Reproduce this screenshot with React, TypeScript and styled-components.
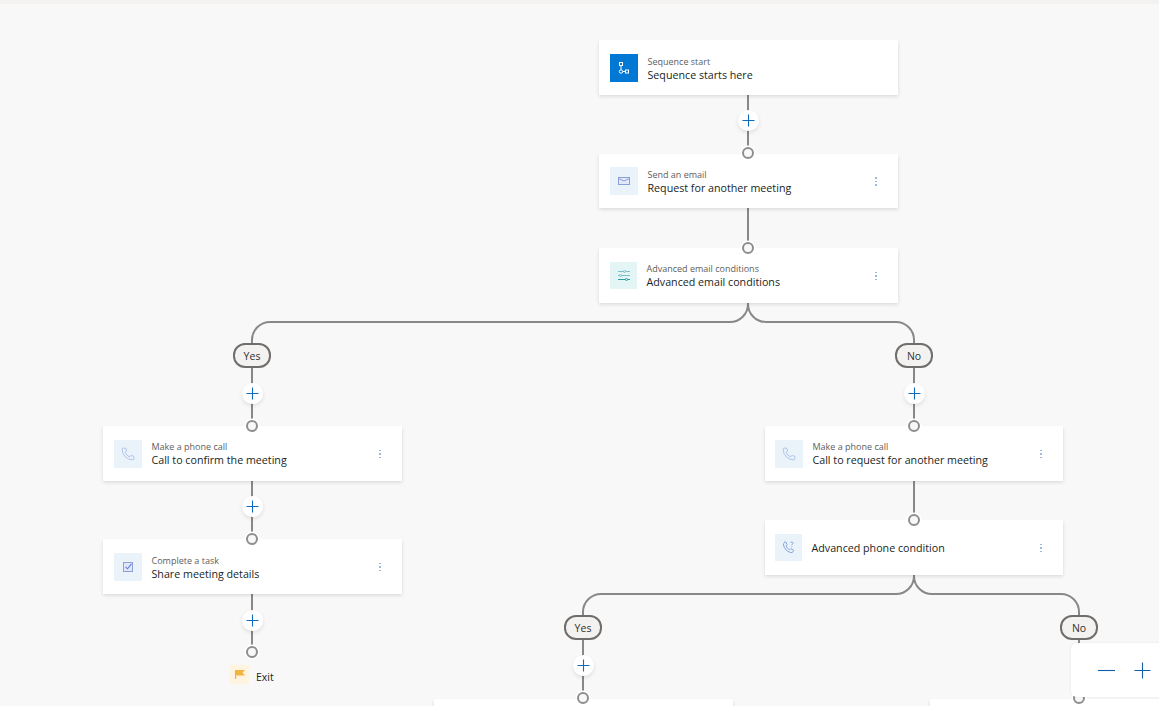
import React from "react";
import styled, { createGlobalStyle } from "styled-components";
import { Phone } from "lucide-react";

const GlobalStyle = createGlobalStyle`
  html, body {
    margin: 0;
    padding: 0;
    height: 100%;
    overflow: hidden;
    background: #f8f8f8;
    font-family: "Open Sans", "Noto Sans", "Liberation Sans", sans-serif;
  }
`;

type Tone = "start" | "blue" | "teal";
type IconKind = "flow" | "mail" | "sliders" | "phone" | "phoneAsk" | "task";

interface StepData {
  x: number;
  y: number;
  w?: number;
  h?: number;
  pad?: number;
  kind: IconKind;
  tone: Tone;
  label?: string;
  title?: string;
  menu?: boolean;
  tile?: number;
  lower?: boolean;
}

const steps: StepData[] = [
  { x: 599, y: 40, h: 55, kind: "flow", tone: "start", label: "Sequence start", title: "Sequence starts here", lower: true },
  { x: 599, y: 154, kind: "mail", tone: "blue", label: "Send an email", title: "Request for another meeting", menu: true },
  { x: 599, y: 248, h: 55, kind: "sliders", tone: "teal", label: "Advanced email conditions", title: "Advanced email conditions", menu: true, tile: 27 },
  { x: 103, y: 426, h: 55, kind: "phone", tone: "blue", label: "Make a phone call", title: "Call to confirm the meeting", menu: true },
  { x: 103, y: 539, h: 55, kind: "task", tone: "blue", label: "Complete a task", title: "Share meeting details", menu: true, lower: true },
  { x: 765, y: 426, w: 298, h: 55, pad: 10, kind: "phone", tone: "blue", label: "Make a phone call", title: "Call to request for another meeting", menu: true },
  { x: 765, y: 520, w: 298, h: 55, pad: 10, kind: "phoneAsk", tone: "blue", title: "Advanced phone condition", menu: true, tile: 27 },
  { x: 434, y: 699, kind: "phone", tone: "blue" },
  { x: 930, y: 699, kind: "phone", tone: "blue" },
];

const plusButtons = [
  [748, 120],
  [252, 393],
  [252, 506],
  [252, 620],
  [914, 393],
  [583, 665],
];

const ports = [
  [748, 153],
  [748, 247.5],
  [252, 425.5],
  [252, 539],
  [252, 652],
  [914, 425.5],
  [914, 520],
  [583, 698],
  [1079, 698],
];

const pills = [
  { x: 252, y: 355, text: "Yes" },
  { x: 914, y: 355, text: "No" },
  { x: 583, y: 627, text: "Yes" },
  { x: 1079, y: 627, text: "No" },
];

const wires = [
  "M748 95V153",
  "M748 208V247",
  "M748 303V304a18 18 0 0 1-18 18H270a18 18 0 0 0-18 18V425",
  "M748 303V304a18 18 0 0 0 18 18H896a18 18 0 0 1 18 18V425",
  "M252 481V539",
  "M252 594V652",
  "M914 481V520",
  "M914 575V576a18 18 0 0 1-18 18H601a18 18 0 0 0-18 18V698",
  "M914 575V576a18 18 0 0 0 18 18H1061a18 18 0 0 1 18 18V698",
];

const Page = styled.div`
  width: 1159px;
  height: 706px;
  display: flex;
  flex-direction: column;
  overflow: hidden;
`;

const TopStrip = styled.div`
  height: 4px;
  flex: none;
  background: #f3f2f1;
`;

const Canvas = styled.div`
  position: relative;
  flex: 1;
  margin-top: -4px;
`;

const Wires = styled.svg`
  position: absolute;
  left: 0;
  top: 0;
`;

const StepCard = styled.div<{ $x: number; $y: number; $w: number; $h: number; $pad: number }>`
  position: absolute;
  left: ${(p) => p.$x}px;
  top: ${(p) => p.$y}px;
  width: ${(p) => p.$w}px;
  height: ${(p) => p.$h}px;
  box-sizing: border-box;
  padding: 0 16px 0 ${(p) => p.$pad}px;
  display: flex;
  align-items: center;
  background: #fff;
  box-shadow: 0 1.6px 3.6px rgba(0, 0, 0, 0.13), 0 0.3px 0.9px rgba(0, 0, 0, 0.11);
`;

const toneBg: Record<Tone, string> = {
  start: "#0078d4",
  blue: "#ebf3fa",
  teal: "#e3f5f5",
};

const IconTile = styled.div<{ $tone: Tone; $size: number }>`
  width: ${(p) => p.$size}px;
  height: ${(p) => p.$size}px;
  flex: none;
  display: flex;
  align-items: center;
  justify-content: center;
  background: ${(p) => toneBg[p.$tone]};
`;

const StepText = styled.div<{ $lower: boolean }>`
  flex: 1;
  margin-left: 9.5px;
  padding-top: ${(p) => (p.$lower ? 2 : 0)}px;
  display: flex;
  flex-direction: column;
  min-width: 0;
`;

const StepLabel = styled.span`
  font-size: 9px;
  line-height: 13px;
  color: #605e5c;
`;

const StepTitle = styled.span`
  font-size: 10.7px;
  line-height: 14px;
  color: #201f1e;
`;

const KebabButton = styled.div`
  width: 2px;
  display: flex;
  flex-direction: column;
  gap: 2px;
  margin: 1px 5px 0 0;
`;

const KebabDot = styled.i`
  display: block;
  width: 1.5px;
  height: 1.5px;
  border-radius: 50%;
  background: #86aedb;
`;

const PlusButton = styled.div<{ $x: number; $y: number }>`
  position: absolute;
  left: ${(p) => p.$x - 10.5}px;
  top: ${(p) => p.$y - 10.5}px;
  width: 21px;
  height: 21px;
  border-radius: 50%;
  background: #fff;
  display: flex;
  align-items: center;
  justify-content: center;
  box-shadow: 0 2px 4px rgba(0, 0, 0, 0.1);
`;

const Port = styled.div<{ $x: number; $y: number }>`
  position: absolute;
  left: ${(p) => p.$x - 6}px;
  top: ${(p) => p.$y - 6}px;
  width: 12px;
  height: 12px;
  box-sizing: border-box;
  border: 2px solid #908e8c;
  border-radius: 50%;
  background: #f8f8f8;
  box-shadow: 0 0 0 1.5px #fff;
`;

const BranchPill = styled.div<{ $x: number; $y: number }>`
  position: absolute;
  left: ${(p) => p.$x - 19}px;
  top: ${(p) => p.$y - 12.5}px;
  width: 38px;
  height: 25px;
  box-sizing: border-box;
  border: 2px solid #706e6c;
  border-radius: 12px;
  background: #f3f2f1;
  display: flex;
  align-items: center;
  justify-content: center;
  padding-top: 1px;
  font-size: 10.5px;
  color: #323130;
`;

const ExitMark = styled.div`
  position: absolute;
  left: 230px;
  top: 665px;
  display: flex;
  align-items: center;
  gap: 7px;
  font-size: 10.5px;
  color: #201f1e;
`;

const ExitTile = styled.div`
  width: 19px;
  height: 19px;
  display: flex;
  align-items: center;
  justify-content: center;
  background: #fff4e0;
`;

const ExitLabel = styled.span`
  margin-top: 5px;
`;

const ZoomPanel = styled.div`
  position: absolute;
  left: 1071px;
  top: 643px;
  width: 100px;
  height: 54px;
  border-radius: 6px;
  background: #fff;
  display: flex;
  align-items: center;
  gap: 19px;
  padding-left: 27px;
  box-sizing: border-box;
  box-shadow: 0 0 3px rgba(0, 0, 0, 0.08);
`;

const StepIcon = ({ kind }: { kind: IconKind }) => {
  if (kind === "flow")
    return (
      <svg width="14" height="14" viewBox="0 0 14 14" fill="none" stroke="#fff" strokeWidth="1">
        <rect x="2.5" y="1.5" width="3" height="3" />
        <path d="M4 4.500v4" />
        <circle cx="4" cy="10.500" r="1.700" />
        <path d="M5.700 10.500h2.800" />
        <rect x="8.500" y="9" width="3" height="3" />
      </svg>
    );
  if (kind === "mail")
    return (
      <svg width="14" height="14" viewBox="0 0 14 14" fill="none" stroke="#8a9fdb" strokeWidth="1">
        <rect x="1.500" y="3.500" width="11" height="7" fill="#e3e9f8" />
        <path d="M1.500 4.500l5.500 2.500 5.500-2.500" />
      </svg>
    );
  if (kind === "sliders")
    return (
      <svg width="14" height="14" viewBox="0 0 14 14" fill="none" stroke="#7cc0c4" strokeWidth="1">
        <path d="M1 2.500h12M1 6.500h12" />
        <path d="M1 10.500h12" stroke="#2f9ea5" />
        <circle cx="7.500" cy="2.500" r="1" fill="#e3f5f5" />
        <circle cx="3.500" cy="6.500" r="1" fill="#e3f5f5" />
        <circle cx="9.500" cy="10.500" r="1" fill="#e3f5f5" stroke="#2f9ea5" />
      </svg>
    );
  if (kind === "phone") return <Phone size={14} strokeWidth={1} color="#86a3e0" />;
  if (kind === "phoneAsk")
    return (
      <svg width="15" height="15" viewBox="0 0 15 15" fill="none" stroke="#86a3e0" strokeWidth="1">
        <path d="M3 2.500l1.600-.7 1.600 2.900-1.100 1.100c.5 1.700 2 3.300 3.700 3.900l1.100-1.100 2.700 1.700-.7 1.600c-.4.600-1.200.9-2 .7-4-1.100-6.600-3.900-7.400-7.600-.1-1 .2-1.900.9-2.500z" />
        <path d="M9.500 2.800c.3-1 2.400-1.100 2.600.2.100 1-1.300 1.100-1.300 2.300M10.800 6.500v.8" />
      </svg>
    );
  return (
    <svg width="14" height="14" viewBox="0 0 14 14" fill="none">
      <rect x="2.500" y="2.500" width="9" height="9" fill="#e1e7f7" stroke="#8a9fdb" />
      <path d="M4.500 6.800l2 2 4-5" stroke="#5f7cd8" strokeWidth="1.100" />
    </svg>
  );
};

const Step = ({ step }: { step: StepData }) => (
  <StepCard $x={step.x} $y={step.y} $w={step.w ?? 299} $h={step.h ?? 54} $pad={step.pad ?? 11}>
    <IconTile $tone={step.tone} $size={step.tile ?? 28}>
      <StepIcon kind={step.kind} />
    </IconTile>
    <StepText $lower={!!step.lower}>
      {step.label && <StepLabel>{step.label}</StepLabel>}
      {step.title && <StepTitle>{step.title}</StepTitle>}
    </StepText>
    {step.menu && (
      <KebabButton>
        <KebabDot />
        <KebabDot />
        <KebabDot />
      </KebabButton>
    )}
  </StepCard>
);

const PlusGlyph = ({ color = "#0f6cbd", size = 13 }: { color?: string; size?: number }) => (
  <svg width={size} height={size} viewBox={`0 0 ${size} ${size}`}>
    <path d={`M0.500 ${size / 2}H${size - 0.5}M${size / 2} 0.500V${size - 0.5}`} stroke={color} strokeWidth="1.100" fill="none" />
  </svg>
);

export default function App() {
  return (
    <Page>
      <GlobalStyle />
      <TopStrip />
      <Canvas>
        <Wires width="1159" height="706" fill="none" stroke="#8a8886" strokeWidth="2">
          {wires.map((d) => (
            <path key={d} d={d} />
          ))}
        </Wires>
        {steps.map((step) => (
          <Step key={`${step.x}-${step.y}`} step={step} />
        ))}
        {ports.map(([x, y]) => (
          <Port key={`${x}-${y}`} $x={x} $y={y} />
        ))}
        {plusButtons.map(([x, y]) => (
          <PlusButton key={`${x}-${y}`} $x={x} $y={y}>
            <PlusGlyph />
          </PlusButton>
        ))}
        {pills.map((pill) => (
          <BranchPill key={`${pill.x}-${pill.y}`} $x={pill.x} $y={pill.y}>
            {pill.text}
          </BranchPill>
        ))}
        <ExitMark>
          <ExitTile>
            <svg width="12" height="12" viewBox="0 0 12 12">
              <path d="M1 1h10L8.500 3.700 11 6.500H2.200V10H1z" fill="#f2b441" />
            </svg>
          </ExitTile>
          <ExitLabel>Exit</ExitLabel>
        </ExitMark>
        <ZoomPanel>
          <svg width="17" height="17" viewBox="0 0 17 17">
            <path d="M0 8.500H17" stroke="#0f5ea8" strokeWidth="1.100" />
          </svg>
          <PlusGlyph size={17} color="#0f5ea8" />
        </ZoomPanel>
      </Canvas>
    </Page>
  );
}
